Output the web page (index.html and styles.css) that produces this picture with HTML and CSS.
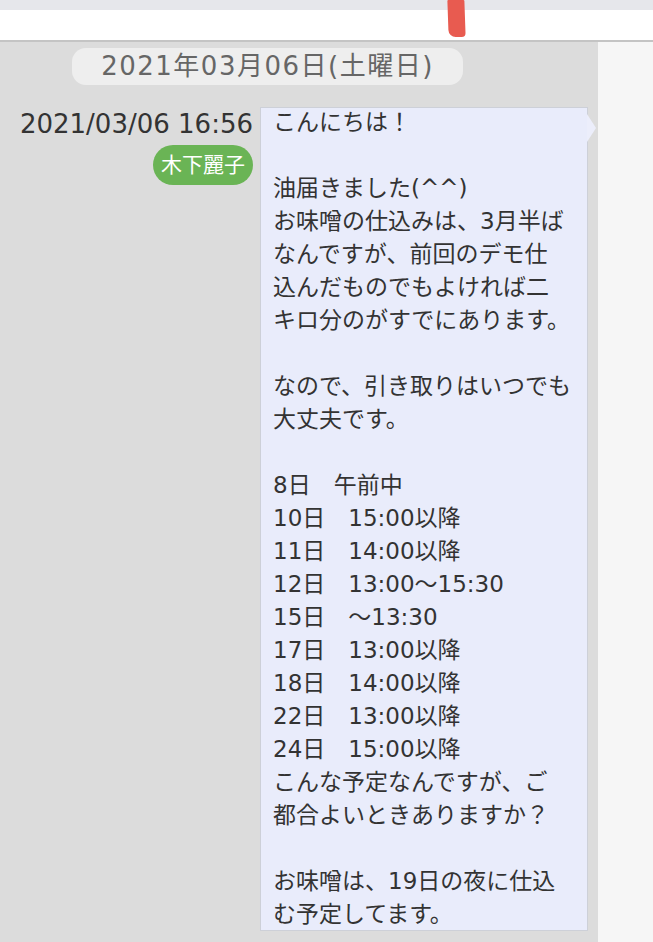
FILE: index.html
```html
<!DOCTYPE html>
<html lang="ja">
<head>
  <meta charset="UTF-8">
  <meta name="viewport" content="width=device-width, initial-scale=1.0">
  <title>メッセージ</title>
  <link rel="stylesheet" href="styles.css">
</head>
<body>

  <header class="topbar">
    <div class="topbar-strip"></div>
    <div class="topbar-main">
      <span class="pen-mark"></span>
    </div>
  </header>

  <main class="page">
    <section class="chat">
      <div class="date-pill">2021年03月06日(土曜日)</div>

      <div class="message">
        <div class="meta">
          <div class="time">2021/03/06 16:56</div>
          <div class="sender">木下麗子</div>
        </div>
        <div class="bubble">
          <p class="bubble-text">こんにちは！

油届きました(^^)
お味噌の仕込みは、3月半ば
なんですが、前回のデモ仕
込んだものでもよければ二
キロ分のがすでにあります。

なので、引き取りはいつでも
大丈夫です。

8日　午前中
10日　15:00以降
11日　14:00以降
12日　13:00〜15:30
15日　〜13:30
17日　13:00以降
18日　14:00以降
22日　13:00以降
24日　15:00以降
こんな予定なんですが、ご
都合よいときありますか？

お味噌は、19日の夜に仕込
む予定してます。</p>
        </div>
      </div>
    </section>
    <aside class="side"></aside>
  </main>

</body>
</html>
```

FILE: styles.css
```css
body {
  margin: 0;
  padding: 0;
  font-family: "DejaVu Sans", "Noto Sans CJK JP", sans-serif;
  background-color: #f6f6f6;
  color: #333;
}

.topbar-strip {
  height: 10px;
  background-color: #e6e7eb;
}

.topbar-main {
  position: relative;
  height: 30px;
  background-color: #fff;
  border-bottom: 2px solid #c4c4c4;
}

/* red pen stroke over the bar */
.pen-mark {
  position: absolute;
  left: 448px;
  top: -10px;
  width: 17px;
  height: 37px;
  background-color: #e85b50;
  border-radius: 1px 1px 4px 7px;
  transform: skewX(2deg);
}

.page {
  display: flex;
  min-height: 900px;
}

.chat {
  width: 598px;
  background-color: #dcdcdc;
  padding-top: 6px;
}

.side {
  flex: 1;
  background-color: #f6f6f6;
}

.date-pill {
  width: 391px;
  height: 37px;
  margin-left: 72px;
  background-color: #eeeeee;
  border-radius: 14px;
  color: #666;
  font-size: 26px;
  letter-spacing: 1.5px;
  line-height: 37px;
  text-align: center;
}

.message {
  display: flex;
  gap: 7px;
  margin-top: 22px;
}

.meta {
  width: 253px;
  display: flex;
  flex-direction: column;
  align-items: flex-end;
}

.time {
  font-size: 26px;
  line-height: 34px;
  color: #333;
}

.sender {
  margin-top: 4px;
  height: 40px;
  padding: 0 8px;
  border-radius: 20px;
  background-color: #6ab455;
  color: #fff;
  font-size: 21px;
  line-height: 40px;
}

.bubble {
  position: relative;
  width: 326px;
  background-color: #e9ecfb;
  border: 1px solid #cdd0d8;
}

/* little tail on the right */
.bubble::after {
  content: "";
  position: absolute;
  right: -9px;
  top: 6px;
  border-top: 14px solid transparent;
  border-bottom: 14px solid transparent;
  border-left: 9px solid #eceefb;
}

.bubble-text {
  margin: -2px 0 -1px 12px;
  white-space: pre-line;
  font-size: 23px;
  line-height: 33px;
  color: #333;
}
```
